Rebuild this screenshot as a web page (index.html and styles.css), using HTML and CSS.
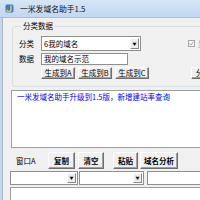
FILE: index.html
```html
<!DOCTYPE html>
<html>
<head>
<meta charset="utf-8">
<link rel="stylesheet" href="styles.css">
</head>
<body>
<div class="win">
  <div class="titlebar">
    <svg class="appicon" width="9" height="9" viewBox="0 0 9 9">
      <rect x="0.5" y="0.5" width="8" height="8" rx="1.5" fill="#3a7bd5"/>
      <path d="M6 1.5 V5.5 Q6 7.5 4 7.5 Q2 7.5 2 5.8" stroke="#f2c230" stroke-width="1.6" fill="none"/>
    </svg>
    <span class="title">一米发域名助手1.5</span>
  </div>
  <div class="client">
    <div class="frame"></div>
    <div class="content">
      <fieldset class="group">
        <legend>分类数据</legend>
        <div class="row r1">
          <span class="lbl">分类</span>
          <div class="combo wide"><span class="ctext">6我的域名</span><span class="cbtn">▼</span></div>
          <span class="chk"><svg width="7" height="7" viewBox="0 0 7 7"><rect x="0.5" y="0.5" width="6" height="6" fill="#f4f4f4" stroke="#a6a6a6"/><path d="M1.5 3.5 L3 5 L5.5 1.8" stroke="#a6a6a6" fill="none"/></svg></span>
          <span class="chklbl">显</span>
        </div>
        <div class="row r2">
          <span class="lbl">数据</span>
          <div class="input">我的域名示范</div>
        </div>
        <div class="row r3">
          <button class="btn g">生成到A</button>
          <button class="btn g">生成到B</button>
          <button class="btn g">生成到C</button>
          <button class="btn g far">分类管理</button>
        </div>
      </fieldset>
      <div class="memo">一米发域名助手升级到1.5版，新增建站率查询</div>
      <div class="row tools">
        <span class="lbl2">窗口A</span>
        <button class="btn t w1">复制</button>
        <button class="btn t w2">清空</button>
        <button class="btn t w3">粘贴</button>
        <button class="btn t w4">域名分析</button>
      </div>
      <div class="row combos">
        <div class="combo c1"><span class="ctext"></span><span class="cbtn">▼</span></div>
        <div class="combo c2"><span class="ctext"></span><span class="cbtn">▼</span></div>
        <div class="box3"></div>
      </div>
      <div class="lower"></div>
    </div>
  </div>
</div>
</body>
</html>
```
FILE: styles.css
```css
html, body { margin: 0; padding: 0; }
body {
  font-family: "Noto Sans CJK SC", "Liberation Sans", sans-serif;
  font-size: 7.5px;
  color: #000;
  background: #f0f0f0;
}
.win {
  width: 200px;
  height: 200px;
  overflow: hidden;
  background: #f0f0f0;
}
.titlebar {
  height: 17px;
  border-bottom: 1px solid #a8bdd6;
  background: linear-gradient(#d6e5f7, #c2d7f1);
  display: flex;
  align-items: center;
  padding-left: 5px;
  gap: 6px;
}
.appicon { flex: none; }
.title { font-size: 7.8px; line-height: 10px; color: #111; }
.client { display: flex; height: 182px; }
.frame {
  width: 3px;
  flex: none;
  background: #c4d7ee;
  border-right: 1px solid #aab8c6;
  box-sizing: border-box;
}
.content {
  width: 260px;
  flex: none;
  background: #f0f0f0;
}
.group {
  margin: 3px 0 0 9px;
  padding: 5px 0 7px 6px;
  border: 1px solid #d5dfe5;
  border-radius: 3px;
  width: 250px;
  box-sizing: border-box;
}
.group legend {
  padding: 0 2px;
  margin-left: 2px;
  line-height: 10px;
  font-size: 7.5px;
}
.row { display: flex; align-items: center; }
.lbl { width: 22px; flex: none; line-height: 10px; }
.combo {
  height: 15px;
  box-sizing: border-box;
  border: 1px solid #8f8f8f;
  background: #fff;
  display: flex;
  align-items: stretch;
  flex: none;
}
.combo .ctext { flex: 1; line-height: 13px; padding-left: 2px; overflow: hidden; white-space: nowrap; }
.combo .cbtn {
  width: 9px;
  margin: 1px;
  box-sizing: border-box;
  background: #ececec;
  border: 1px solid;
  border-color: #fff #8a8a8a #8a8a8a #fff;
  font-size: 4px;
  display: flex;
  align-items: center;
  justify-content: center;
  color: #000;
}
.wide { width: 100px; }
.chk { margin-left: 47px; display: flex; }
.chklbl { margin-left: 3px; color: #9a9a9a; line-height: 10px; }
.r2 { margin-top: 2px; }
.input {
  width: 87px;
  height: 12px;
  box-sizing: border-box;
  border: 1px solid #8f8f8f;
  background: #fff;
  line-height: 10px;
  padding-left: 2px;
  white-space: nowrap;
  overflow: hidden;
}
.r3 { margin-top: 2px; padding-left: 22px; gap: 3px; }
.btn {
  font-family: inherit;
  font-size: 7.5px;
  line-height: 10px;
  padding: 0;
  margin: 0;
  background: #f0f0f0;
  border: 1px solid;
  border-color: #fff #6f6f6f #6f6f6f #fff;
  box-shadow: inset -1px -1px 0 #a0a0a0;
  color: #000;
  flex: none;
  white-space: nowrap;
}
.g { width: 34px; height: 12px; }
.far { margin-left: 39px; width: 40px; }
.memo {
  margin: 3px 0 0 8px;
  height: 58px;
  box-sizing: border-box;
  border: 1px solid #a0a0a0;
  border-right: none;
  background: #fff;
  color: #0000f0;
  padding: 1px 5px;
  line-height: 10px;
  white-space: nowrap;
}
.tools { margin-top: 4px; height: 17px; }
.lbl2 { margin-left: 13px; width: 32px; flex: none; line-height: 10px; }
.t { height: 17px; font-weight: bold; }
.w1 { width: 27px; }
.w2 { width: 26px; margin-left: 3px; }
.w3 { width: 25px; margin-left: 9px; }
.w4 { width: 38px; margin-left: 2px; }
.combos { margin-top: 2px; }
.combos .combo { height: 14px; }
.combos .combo .ctext { line-height: 12px; }
.c1 { margin-left: 7px; width: 68px; }
.c2 { margin-left: 1px; width: 65px; }
.box3 {
  margin-left: 3px;
  width: 120px;
  height: 14px;
  box-sizing: border-box;
  border: 1px solid #8f8f8f;
  border-right: none;
  background: #fff;
}
.lower {
  margin: 2px 0 0 7px;
  height: 20px;
  border: 1px solid #a0a0a0;
  border-right: none;
  background: #fff;
}
```
